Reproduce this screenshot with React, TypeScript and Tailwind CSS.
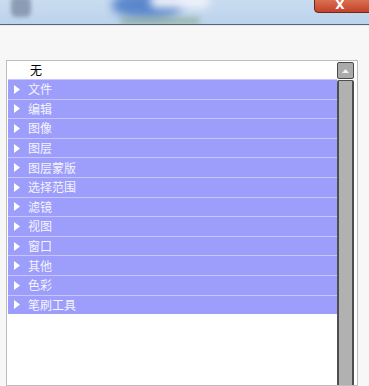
import React from "react";

const items = ["文件", "编辑", "图像", "图层", "图层蒙版", "选择范围", "滤镜", "视图", "窗口", "其他", "色彩", "笔刷工具"];

export default function App() {
  return (
    <div
      className="w-[369px] h-[386px] overflow-hidden bg-[#f7f7f7] flex flex-col"
      style={{ fontFamily: '"Noto Sans CJK SC", "Noto Sans", sans-serif' }}
    >
      {/* title bar */}
      <div className="relative h-[24px] shrink-0 bg-gradient-to-b from-[#c9dcf0] to-[#bcd3ec] overflow-hidden">
        <div className="absolute left-[11px] top-[-3px] w-[20px] h-[20px] rounded-[5px] bg-[#7d8ea5] blur-[2px] opacity-80" />
        <div className="absolute left-[112px] top-[-8px] w-[70px] h-[26px] rounded-[45%] bg-[#4f7fc8] blur-[5px] opacity-90" />
        <div className="absolute left-[150px] top-[-6px] w-[60px] h-[14px] rounded-full bg-[#eef2fa] blur-[4px]" />
        <div className="absolute left-[120px] top-[18px] w-[80px] h-[6px] rounded-full bg-[#7e9a72] blur-[3px] opacity-60" />
        <div className="absolute left-[314px] top-[-4px] w-[60px] h-[17px] rounded-[4px] border border-[#6b2a1c] bg-gradient-to-b from-[#e07a5a] to-[#c2412a] flex items-end justify-center">
          <span className="text-white font-bold text-[12px] leading-[12px] mr-[8px] mb-[1px]" style={{ fontFamily: '"DejaVu Sans", sans-serif' }}>X</span>
        </div>
      </div>
      <div className="h-px shrink-0 bg-[#5b6472]" />
      <div className="h-px shrink-0 bg-[#e6e9ee]" />

      {/* list box */}
      <div className="mt-[34px] ml-[6px] w-[352px] flex-1 border border-[#bdbdbd] bg-white flex">
        <div className="flex-1 flex flex-col pl-px">
          <div className="h-[18px] flex items-center pl-[22px] text-[12px] text-black leading-none">无</div>
          {items.map((t) => (
            <div
              key={t}
              className="h-[19.6px] flex items-center bg-[#9d9dfb] border-t border-[#c6c6fd] text-[12px] text-[#f4f4ff] leading-none"
            >
              <svg width="6" height="9" viewBox="0 0 6 9" className="ml-[6px] mr-[8px]">
                <path d="M0 0 L6 4.5 L0 9 Z" fill="#ffffff" />
              </svg>
              <span>{t}</span>
            </div>
          ))}
        </div>
        <div className="w-[17px] mr-[3px] flex flex-col">
          <div className="h-[17px] mt-px border border-[#4a4a4a] rounded-[2px] bg-[#ababab] flex items-center justify-center">
            <svg width="7" height="4" viewBox="0 0 7 4">
              <path d="M0 4 L3.5 0 L7 4 Z" fill="#f2f2f2" />
            </svg>
          </div>
          <div className="flex-1 mt-px border-x-2 border-t border-[#4e4e4e] rounded-t-[2px] bg-[#b1b1b1]" />
        </div>
      </div>
    </div>
  );
}
